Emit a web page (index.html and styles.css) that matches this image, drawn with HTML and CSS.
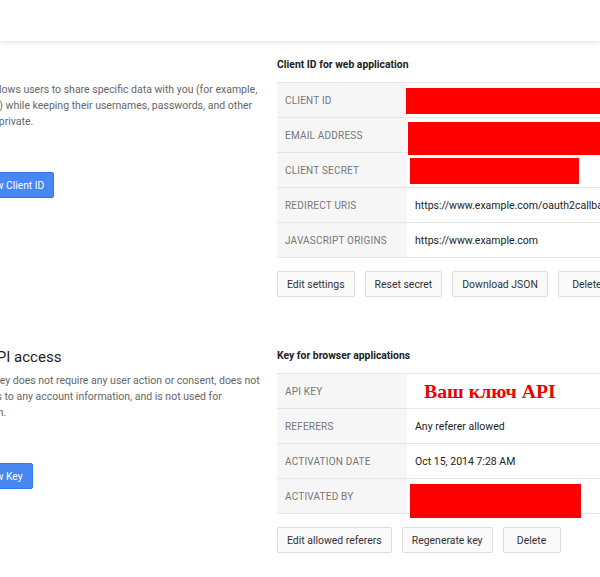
FILE: index.html
```html
<!DOCTYPE html>
<html lang="en">
<head>
<meta charset="utf-8">
<title>Credentials</title>
<link rel="stylesheet" href="styles.css">
</head>
<body>
<header class="topbar"></header>
<main class="content">
  <section class="api-section">
    <div class="intro">
      <h2 class="intro-title">OAuth</h2>
      <p class="intro-text">OAuth 2.0 allows users to share specific data with you (for example,<br>contact lists) while keeping their usernames, passwords, and other<br>information private.</p>
      <button class="btn-primary">Create new Client ID</button>
    </div>
    <div class="cred">
      <h3 class="cred-title">Client ID for web application</h3>
      <div class="kv">
        <div class="kv-row"><div class="kv-key">CLIENT ID</div><div class="kv-val"><span class="redact redact-1"></span></div></div>
        <div class="kv-row"><div class="kv-key">EMAIL ADDRESS</div><div class="kv-val"><span class="redact redact-2"></span></div></div>
        <div class="kv-row"><div class="kv-key">CLIENT SECRET</div><div class="kv-val"><span class="redact redact-3"></span></div></div>
        <div class="kv-row"><div class="kv-key">REDIRECT URIS</div><div class="kv-val">https://www.example.com/oauth2callback</div></div>
        <div class="kv-row"><div class="kv-key">JAVASCRIPT ORIGINS</div><div class="kv-val">https://www.example.com</div></div>
      </div>
      <div class="actions">
        <button class="btn">Edit settings</button>
        <button class="btn">Reset secret</button>
        <button class="btn">Download JSON</button>
        <button class="btn">Delete</button>
      </div>
    </div>
  </section>
  <section class="api-section">
    <div class="intro">
      <h2 class="intro-title">Public API access</h2>
      <p class="intro-text">Use of this key does not require any user action or consent, does not<br>grant access to any account information, and is not used for<br>authorization.</p>
      <button class="btn-primary">Create new Key</button>
    </div>
    <div class="cred">
      <h3 class="cred-title">Key for browser applications</h3>
      <div class="kv">
        <div class="kv-row"><div class="kv-key">API KEY</div><div class="kv-val"><span class="api-note">Ваш ключ API</span></div></div>
        <div class="kv-row"><div class="kv-key">REFERERS</div><div class="kv-val">Any referer allowed</div></div>
        <div class="kv-row"><div class="kv-key">ACTIVATION DATE</div><div class="kv-val">Oct 15, 2014 7:28 AM</div></div>
        <div class="kv-row"><div class="kv-key">ACTIVATED BY</div><div class="kv-val"><span class="redact redact-4"></span></div></div>
      </div>
      <div class="actions">
        <button class="btn">Edit allowed referers</button>
        <button class="btn">Regenerate key</button>
        <button class="btn">Delete</button>
      </div>
    </div>
  </section>
</main>
</body>
</html>
```
FILE: styles.css
```css
* { box-sizing: border-box; }

body {
  margin: 0;
  width: 600px;
  height: 577px;
  overflow: hidden;
  background: #fff;
  font-family: Roboto, "Liberation Sans", Arial, sans-serif;
  color: #222;
}

.topbar {
  height: 41px;
  background: #fff;
  box-shadow: 0 1px 5px rgba(0, 0, 0, 0.13);
}

.content {
  padding-top: 17px;
  display: flex;
  flex-direction: column;
  gap: 52px;
}

.api-section {
  display: flex;
  margin-left: -58px;
}

.intro {
  flex: 0 0 315px;
  min-width: 0;
  margin-right: 20px;
  white-space: nowrap;
}

.intro-title {
  margin: 0 0 8px;
  font-size: 15px;
  line-height: 16px;
  font-weight: 400;
  color: #222;
}

.intro-text {
  margin: 0 0 42px;
  font-size: 10.5px;
  line-height: 16px;
  color: #666;
}

.btn-primary {
  height: 26px;
  padding: 0 9px;
  border: 1px solid #3079ed;
  border-radius: 2px;
  background: #4787f1;
  color: #fff;
  font-family: inherit;
  font-size: 10.3px;
}

.cred {
  flex: 0 0 420px;
  min-width: 0;
}

.cred-title {
  margin: 0 0 10px;
  font-size: 10.4px;
  line-height: 14px;
  font-weight: 700;
  color: #222;
}

.kv {
  border-top: 1px solid #e6e6e6;
}

.kv-row {
  display: flex;
  height: 35px;
  border-bottom: 1px solid #e6e6e6;
}

.kv-key {
  flex: 0 0 130px;
  display: flex;
  align-items: center;
  padding-left: 8px;
  background: #f6f6f6;
  font-size: 10px;
  color: #777;
  letter-spacing: 0.2px;
}

.kv-val {
  position: relative;
  flex: 1;
  display: flex;
  align-items: center;
  padding-left: 8px;
  font-size: 10.5px;
  color: #222;
  white-space: nowrap;
}

.redact {
  position: absolute;
  background: #ff0000;
}

.redact-1 { left: -1px; top: 5px; width: 220px; height: 26px; }
.redact-2 { left: 1px; top: 4px; width: 220px; height: 33px; }
.redact-3 { left: 3px; top: 5px; width: 169px; height: 26px; }
.redact-4 { left: 3px; top: 5px; width: 171px; height: 34px; }

.api-note {
  margin-left: 9px;
  font-family: "Liberation Serif", "Times New Roman", serif;
  font-weight: 700;
  font-size: 19.8px;
  color: #ee0000;
}

.actions {
  display: flex;
  gap: 10px;
  margin-top: 13px;
}

.btn {
  min-width: 58px;
  height: 26px;
  padding: 0 9px;
  border: 1px solid #dcdcdc;
  border-radius: 2px;
  background: #fafafa;
  color: #333;
  font-family: inherit;
  font-size: 10.45px;
  white-space: nowrap;
}
```
